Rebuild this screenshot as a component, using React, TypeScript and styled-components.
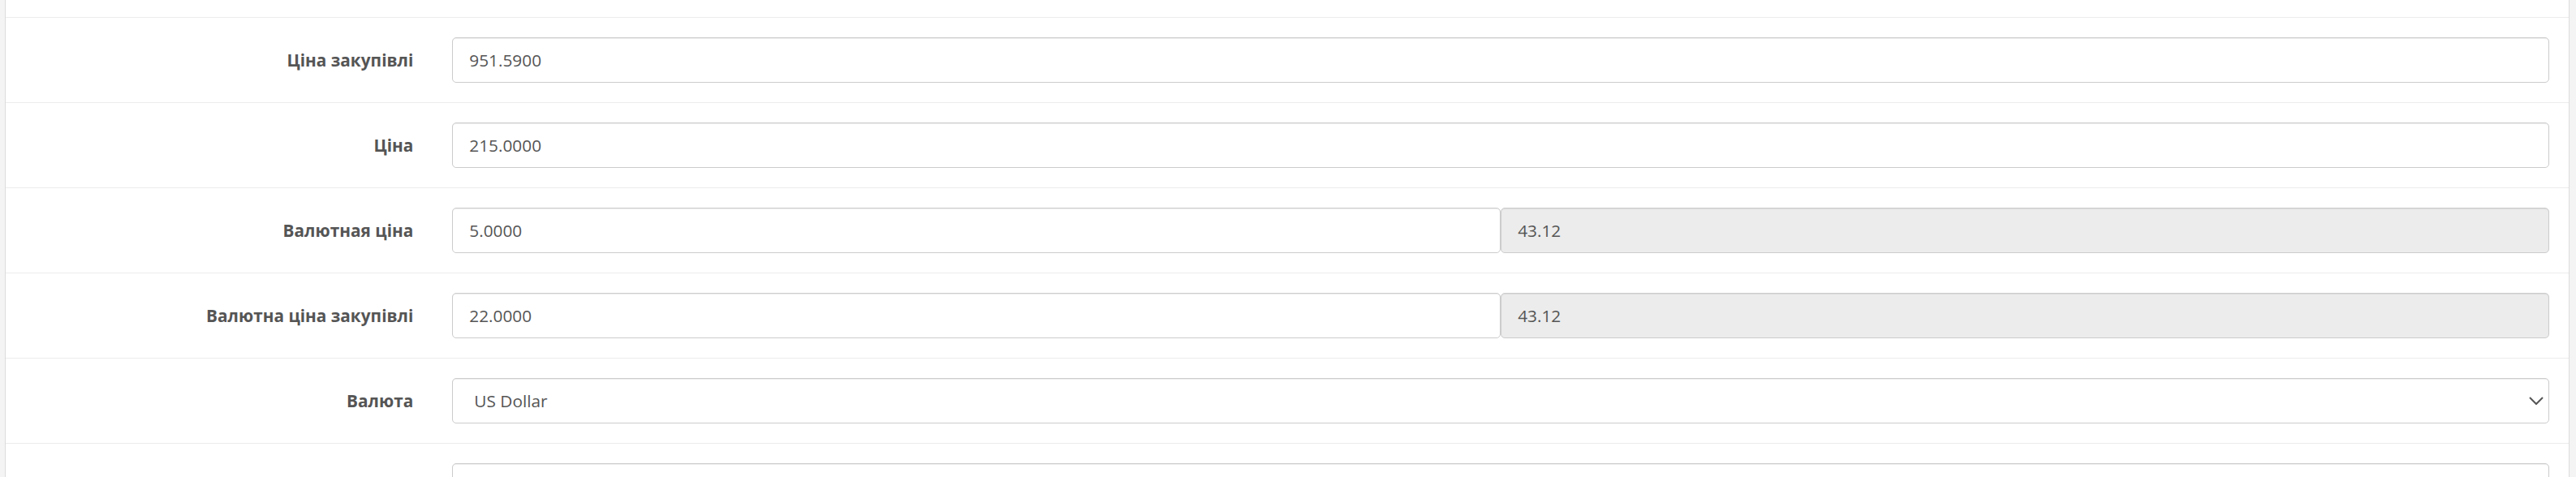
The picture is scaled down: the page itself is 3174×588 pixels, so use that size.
import React from 'react';
import styled, { createGlobalStyle } from 'styled-components';

const GlobalStyle = createGlobalStyle`
  html, body { margin: 0; padding: 0; }
  body {
    background: #f4f4f4;
    font-family: "Open Sans", "Liberation Sans", sans-serif;
    overflow: hidden;
  }
`;

const Page = styled.div`
  padding: 0 8px 0 6px;
`;

const Panel = styled.div`
  background: #ffffff;
  border-left: 1px solid #dcdcdc;
  border-right: 1px solid #dcdcdc;
  padding-top: 21px;
`;

const FormRow = styled.div`
  display: grid;
  grid-template-columns: 1fr 5fr;
  align-items: center;
  border-top: 1px solid #ececec;
  padding: 24px 0;
`;

const Label = styled.label`
  padding: 0 24px;
  text-align: right;
  font-size: 20.8px;
  font-weight: 700;
  color: #555555;
`;

const Field = styled.div`
  padding: 0 24px;
  display: flex;
  position: relative;
`;

const Input = styled.input`
  flex: 1;
  min-width: 0;
  box-sizing: border-box;
  height: 56px;
  border: 1px solid #cccccc;
  border-radius: 5px;
  padding: 0 20px;
  font-family: "Open Sans", "Liberation Sans", sans-serif;
  font-size: 20.8px;
  color: #555555;
  background: #ffffff;
  box-shadow: inset 0 1px 1px rgba(0, 0, 0, 0.075);
  outline: none;

  &:disabled {
    background: #ececec;
    color: #555555;
    -webkit-text-fill-color: #555555;
    opacity: 1;
  }
`;

const Select = styled.select`
  flex: 1;
  min-width: 0;
  box-sizing: border-box;
  height: 56px;
  border: 1px solid #cccccc;
  border-radius: 5px;
  padding: 0 60px 0 26px;
  font-family: "Open Sans", "Liberation Sans", sans-serif;
  font-size: 20.8px;
  color: #555555;
  background: #ffffff;
  box-shadow: inset 0 1px 1px rgba(0, 0, 0, 0.075);
  appearance: none;
  -webkit-appearance: none;
  outline: none;
`;

const Chevron = styled.svg`
  position: absolute;
  right: 31px;
  top: 50%;
  transform: translateY(-50%);
  width: 18px;
  height: 11px;
  pointer-events: none;
`;

type Row = {
  label: string;
  values: { value: string; disabled?: boolean }[];
};

const rows: Row[] = [
  { label: 'Ціна закупівлі', values: [{ value: '951.5900' }] },
  { label: 'Ціна', values: [{ value: '215.0000' }] },
  { label: 'Валютная ціна', values: [{ value: '5.0000' }, { value: '43.12', disabled: true }] },
  { label: 'Валютна ціна закупівлі', values: [{ value: '22.0000' }, { value: '43.12', disabled: true }] },
];

export default function App() {
  return (
    <>
      <GlobalStyle />
      <Page>
        <Panel>
          {rows.map((r) => (
            <FormRow key={r.label}>
              <Label>{r.label}</Label>
              <Field>
                {r.values.map((v, i) => (
                  <Input key={i} defaultValue={v.value} disabled={v.disabled} />
                ))}
              </Field>
            </FormRow>
          ))}
          <FormRow>
            <Label>Валюта</Label>
            <Field>
              <Select defaultValue="USD">
                <option value="UAH">Гривня</option>
                <option value="USD">US Dollar</option>
                <option value="EUR">Euro</option>
              </Select>
              <Chevron viewBox="0 0 18 11" fill="none">
                <path d="M1 1.5 L9 9.5 L17 1.5" stroke="#555555" strokeWidth="2" />
              </Chevron>
            </Field>
          </FormRow>
          <FormRow>
            <Label>Кількість</Label>
            <Field>
              <Input defaultValue="" />
            </Field>
          </FormRow>
        </Panel>
      </Page>
    </>
  );
}
